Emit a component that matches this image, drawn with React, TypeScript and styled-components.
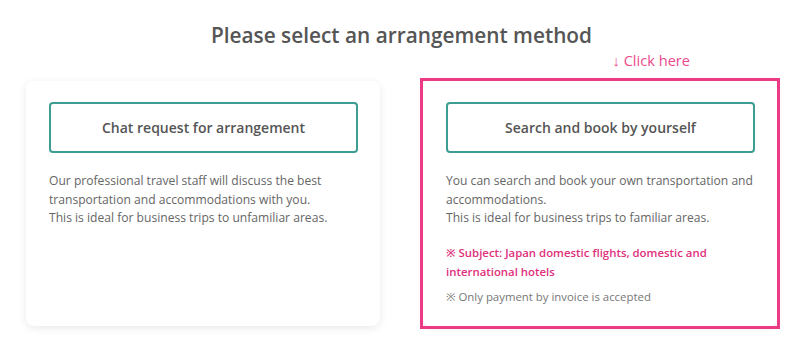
import React from "react";
import styled, { createGlobalStyle } from "styled-components";

const Global = createGlobalStyle`
  html, body { margin: 0; padding: 0; background: #fff; }
  body { font-family: "Open Sans", "Noto Sans", sans-serif; color: #555; }
  * { box-sizing: border-box; }
`;

const Page = styled.div`
  width: 800px;
  min-height: 354px;
  padding: 21px 0 0 26px;
`;

const Title = styled.h1`
  margin: 0;
  width: 751px;
  text-align: center;
  font-size: 20.8px;
  line-height: 28px;
  font-weight: 600;
  color: #555;
`;

const HintRow = styled.div`
  display: flex;
  justify-content: flex-end;
  width: 664px;
  height: 32px;
  padding-top: 1px;
`;

const Hint = styled.span`
  font-size: 14.6px;
  line-height: 20px;
  color: #ec4a8c;
`;

const Cards = styled.div`
  display: flex;
  align-items: flex-start;
  gap: 43px;
`;

const Frame = styled.div`
  outline: 3px solid #ec3a84;
`;

const Card = styled.div`
  width: 354px;
  height: 245px;
  background: #fff;
  border-radius: 8px;
  padding: 21px 22px 21px 23px;
  box-shadow: 0 2px 8px rgba(0, 0, 0, 0.09);
`;

const ChoiceButton = styled.button`
  display: flex;
  align-items: center;
  justify-content: center;
  width: 100%;
  height: 51px;
  border: 2px solid #3e9d92;
  border-radius: 4px;
  background: #fff;
  font-family: "Open Sans", "Noto Sans", sans-serif;
  font-size: 14px;
  font-weight: 600;
  color: #555;
  cursor: pointer;
`;

const Description = styled.p`
  margin: 19px 0 0;
  font-size: 12.1px;
  line-height: 18.7px;
  color: #666;
`;

const Note = styled.p<{ $pink?: boolean }>`
  margin: ${(p) => (p.$pink ? "14.7px" : "6px")} 0 0;
  font-size: 11.4px;
  line-height: 19px;
  font-weight: ${(p) => (p.$pink ? 600 : 400)};
  color: ${(p) => (p.$pink ? "#e0307c" : "#777")};
`;

export default function App() {
  return (
    <Page>
      <Global />
      <Title>Please select an arrangement method</Title>
      <HintRow>
        <Hint>↓ Click here</Hint>
      </HintRow>
      <Cards>
        <Card>
          <ChoiceButton>Chat request for arrangement</ChoiceButton>
          <Description>
            Our professional travel staff will discuss the best
            <br />
            transportation and accommodations with you.
            <br />
            This is ideal for business trips to unfamiliar areas.
          </Description>
        </Card>
        <Frame>
          <Card>
            <ChoiceButton>Search and book by yourself</ChoiceButton>
            <Description>
              You can search and book your own transportation and
              <br />
              accommodations.
              <br />
              This is ideal for business trips to familiar areas.
            </Description>
            <Note $pink>
              ※ Subject: Japan domestic flights, domestic and
              <br />
              international hotels
            </Note>
            <Note>※ Only payment by invoice is accepted</Note>
          </Card>
        </Frame>
      </Cards>
    </Page>
  );
}
